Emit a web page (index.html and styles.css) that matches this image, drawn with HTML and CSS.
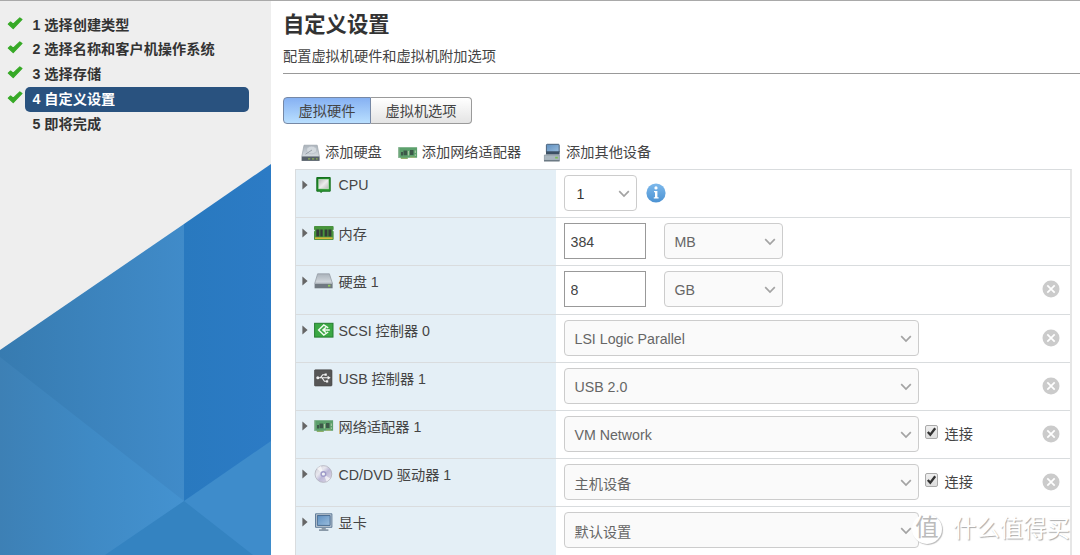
FILE: index.html
```html
<!DOCTYPE html>
<html lang="zh-CN">
<head>
    <meta charset="UTF-8">
    <meta name="viewport" content="width=device-width, initial-scale=1.0">
    <title>自定义设置</title>
    <link rel="stylesheet" href="styles.css">
</head>
<body>

    <!-- icons -->
    <svg class="defs" width="0" height="0">
        <defs>
            <linearGradient id="gGreen" x1="0" y1="0" x2="1" y2="1"><stop offset="0" stop-color="#127a1c"/><stop offset="1" stop-color="#39a53c"/></linearGradient>
            <linearGradient id="gGrey" x1="0" y1="0" x2="1" y2="1"><stop offset="0" stop-color="#b3b3b3"/><stop offset=".5" stop-color="#ececec"/><stop offset="1" stop-color="#b9b9b9"/></linearGradient>
            <linearGradient id="gDisk" x1="0" y1="0" x2="0" y2="1"><stop offset="0" stop-color="#aab2ba"/><stop offset="1" stop-color="#d6dce1"/></linearGradient>
            <linearGradient id="gBlue" x1="0" y1="0" x2="0" y2="1"><stop offset="0" stop-color="#7db9ec"/><stop offset="1" stop-color="#4c92d2"/></linearGradient>
            <linearGradient id="gScreen" x1="0" y1="0" x2="1" y2="1"><stop offset="0" stop-color="#5e8fc0"/><stop offset="1" stop-color="#9abddd"/></linearGradient>
            <linearGradient id="gCd" x1="0" y1="0" x2="1" y2="1"><stop offset="0" stop-color="#c9c9d2"/><stop offset=".35" stop-color="#e8e8ef"/><stop offset=".55" stop-color="#bdb9d8"/><stop offset="1" stop-color="#e4dfe8"/></linearGradient>
        </defs>
        <symbol id="check" viewBox="0 0 16 13"><path d="M1.3 7.1 3.6 5 6.2 7.2 12.8.9l2.2 1.5L6.2 11.5z" fill="#36a926" stroke="#36a926" stroke-width="1.2" stroke-linejoin="round"/></symbol>
        <symbol id="arrow" viewBox="0 0 6 10"><path d="M.4.6 5.6 5 .4 9.4z" fill="#666"/></symbol>
        <symbol id="chevron" viewBox="0 0 12 8"><path d="M1.2 1.2 6 6l4.8-4.8" fill="none" stroke="#a3a3a3" stroke-width="1.7"/></symbol>
        <symbol id="cpu" viewBox="0 0 20 18">
            <path d="M2.8 1.5h13.4v13.7H8.6l-1 1h-1l-1-1H2.8z" fill="url(#gGreen)" stroke="#167020"/>
            <rect x="4.8" y="3.4" width="9.6" height="9.4" fill="url(#gGrey)" stroke="#d3e8cf" stroke-width=".6"/>
        </symbol>
        <symbol id="memory" viewBox="0 0 20 18">
            <path d="M.5 2.5h18.6v3l-.8 1 .8 1v8H.5v-8l.8-1-.8-1z" fill="#47963b" stroke="#4a9140"/>
            <path d="M1 14.2h17.6" stroke="#d2b83c" stroke-width="1.8"/>
            <path d="M2.3 5.5h3v7h-3zM6.3 5.5h2.4v7H6.3zM10.6 5.5h2.8v7h-2.8zM14.4 5.5h3v7h-3z" fill="#343b38"/>
        </symbol>
        <symbol id="disk" viewBox="0 0 20 18">
            <path d="M3.6 1.8h11.8l3 9.4H.8z" fill="url(#gDisk)" stroke="#8f979f" stroke-width=".7"/>
            <path d="M.6 11.2h18v5.1H.6z" fill="#707981"/>
            <path d="M1 11.5h17.2" stroke="#abb3b9"/>
            <path d="M14 12.8h2.4v1.8H14z" fill="#94c95c"/>
        </symbol>
        <symbol id="drive" viewBox="0 0 20 18">
            <path d="M3 1.2h13.2l2.2 11.3H.8z" fill="url(#gDisk)" stroke="#9ba3ab" stroke-width=".7"/>
            <ellipse cx="10.6" cy="6" rx="5" ry="3.8" fill="#d3d9de" stroke="#b4bbc2" stroke-width=".6"/>
            <path d="m11 6-6.5 4.2" stroke="#89929a" stroke-width=".8"/>
            <path d="M.6 12.6h18v4.3H.6z" fill="#57616a"/>
            <path d="M7 14.8h2.2M11 14.8h2.2M15 14.8h1.6" stroke="#8faf53" stroke-width="1.2"/>
        </symbol>
        <symbol id="nic" viewBox="0 0 20 18">
            <path d="M.5 3.2h18.6v10.6H9.6v1.2H2.8v-1.2H.5z" fill="#5ca06c"/>
            <path d="M.8 3.2V14" stroke="#8bb594" stroke-width="1.2"/>
            <path d="M3 8h2v3.5H3zM5.5 6.5h3.7v4.8H5.5zM12 6h3.5v5H12z" fill="#3c5848"/>
            <path d="M10.4 7v4.5M17.3 6.5V9M17.3 10.3V12" stroke="#b4cbaa"/>
            <path d="M3 14.3h6.5M12 13.2h5" stroke="#a8b56c" stroke-width=".9"/>
        </symbol>
        <symbol id="scsi" viewBox="0 0 20 18">
            <rect x=".6" y="2.3" width="18.4" height="13.8" fill="#3ba844" stroke="#257d30"/>
            <path d="M14.2 6.8 9.8 4 4.6 9l5.2 5 4.4-3" fill="none" stroke="#f2faf0" stroke-width="1.4"/>
            <path d="M15.8 9H8.8m3.2-2.6L8.9 9l3.1 2.6" fill="none" stroke="#f2faf0" stroke-width="1.4"/>
        </symbol>
        <symbol id="usb" viewBox="0 0 20 18">
            <rect x=".4" y=".8" width="17.6" height="16.2" rx="1" fill="#565656" stroke="#444" stroke-width=".6"/>
            <path d="M3.5 8.8H14M6.3 8.8l2.4-3h2.6M8 8.8l2.4 3.5h2" fill="none" stroke="#f2f2f2" stroke-width="1.1"/>
            <circle cx="3.8" cy="8.8" r="1.5" fill="#f2f2f2"/>
            <path d="m13.6 6.8 3 2-3 2zM10.6 4.6h2.2v2.2h-2.2zM12 11.2h2.2v2.2H12z" fill="#f2f2f2"/>
        </symbol>
        <symbol id="cd" viewBox="0 0 20 18">
            <circle cx="9.4" cy="9" r="8.4" fill="url(#gCd)" stroke="#b2b2bc" stroke-width=".8"/>
            <path d="M9.4 9 3 3.8A8.2 8.2 0 0 1 7 1.1zM9.4 9l6.8 4.6a8.2 8.2 0 0 1-3.6 3z" fill="#fff" opacity=".65"/>
            <circle cx="9.4" cy="9" r="3" fill="#9f9bc9"/>
            <circle cx="9.4" cy="9" r="1.6" fill="#f1f3f6"/>
        </symbol>
        <symbol id="monitor" viewBox="0 0 20 20">
            <path d="M.6.9h18.2v15H.6z" fill="#c3ccd5" stroke="#54718f"/>
            <path d="M2.6 2.8h14.2v11H2.6z" fill="url(#gScreen)" stroke="#42668c"/>
            <path d="M7.4 16.4h4.6v2H7.4z" fill="#8b98a4"/>
            <path d="M4.5 19h10.4" stroke="#68798b" stroke-width="1.4"/>
        </symbol>
        <symbol id="device" viewBox="0 0 18 20">
            <path d="M4.2 1.3h11.2q.8 0 .8.8v7H3.4v-7q0-.8.8-.8z" fill="url(#gScreen)" stroke="#4b637c"/>
            <path d="M3 8.4h13.6v3.2H3z" fill="#3c5064"/>
            <path d="M1.4 12h15v5.4h-15z" fill="#a9b6bf" stroke="#8b979f" stroke-width=".8"/>
            <path d="M1 17.8h15.6" stroke="#66747f" stroke-width="1.4"/>
            <path d="M12.2 13.8h2.6v1.8h-2.6z" fill="#7cc053"/>
        </symbol>
        <symbol id="info" viewBox="0 0 20 20">
            <circle cx="10" cy="10" r="9.6" fill="url(#gBlue)"/>
            <path d="M8 8h3.4v6.2h1.2v1.4H7.8v-1.4H9V9.2H8z" fill="#fff"/>
            <circle cx="10" cy="4.9" r="1.6" fill="#fff"/>
        </symbol>
        <symbol id="remove" viewBox="0 0 18 18">
            <circle cx="9" cy="9" r="8.5" fill="#cbcbcb"/>
            <path d="m5.3 5.3 7.4 7.4m0-7.4-7.4 7.4" stroke="#fff" stroke-width="1.7"/>
        </symbol>
        <symbol id="tick" viewBox="0 0 11 12">
            <path d="m1.8 6 2.5 2.8L9.2 2.2" fill="none" stroke="#333" stroke-width="2.3"/>
        </symbol>
    </svg>

    <div class="wizard">
        <div class="sidebar">
            <svg class="sidebar-bg" viewBox="0 0 271 555">
                <defs>
                    <linearGradient id="f1"><stop offset="0" stop-color="#377bb0"/><stop offset="1" stop-color="#408bc9"/></linearGradient>
                    <linearGradient id="f2"><stop offset="0" stop-color="#3d80b5"/><stop offset=".5" stop-color="#3f8ac5"/><stop offset="1" stop-color="#4492d0"/></linearGradient>
                    <linearGradient id="f3"><stop offset="0" stop-color="#2979bf"/><stop offset="1" stop-color="#2c7bc5"/></linearGradient>
                </defs>
                <!-- each facet runs under the next one so no seam shows -->
                <path d="M0 350 184 224V555H0z" fill="url(#f1)"/>
                <path d="M184 224 271 164V555H184z" fill="url(#f3)"/>
                <path d="M0 357 184 501V555H0z" fill="url(#f2)"/>
                <path d="M184 501 271 441V555H184z" fill="#3e8ccb"/>
                <path d="M184 501 253 555H105z" fill="#3483c1"/>
            </svg>
            <ul class="steps">
                <li><svg class="check"><use href="#check"/></svg><span>1 选择创建类型</span></li>
                <li><svg class="check"><use href="#check"/></svg><span>2 选择名称和客户机操作系统</span></li>
                <li><svg class="check"><use href="#check"/></svg><span>3 选择存储</span></li>
                <li class="active"><svg class="check"><use href="#check"/></svg><span>4 自定义设置</span></li>
                <li><i class="check"></i><span>5 即将完成</span></li>
            </ul>
        </div>

        <div class="content">
            <h1>自定义设置</h1>
            <p class="subtitle">配置虚拟机硬件和虚拟机附加选项</p>

            <div class="tabs">
                <button class="tab selected">虚拟硬件</button>
                <button class="tab">虚拟机选项</button>
            </div>

            <div class="toolbar">
                <span class="tool"><svg class="icon"><use href="#drive"/></svg>添加硬盘</span>
                <span class="tool"><svg class="icon"><use href="#nic"/></svg>添加网络适配器</span>
                <span class="tool other"><svg class="icon"><use href="#device"/></svg>添加其他设备</span>
            </div>

            <div class="hardware">
                <div class="row">
                    <div class="label"><svg class="arrow"><use href="#arrow"/></svg><svg class="icon"><use href="#cpu"/></svg>CPU</div>
                    <div class="value">
                        <div class="select tiny">1<svg class="chevron"><use href="#chevron"/></svg></div>
                        <svg class="info"><use href="#info"/></svg>
                    </div>
                </div>
                <div class="row">
                    <div class="label"><svg class="arrow"><use href="#arrow"/></svg><svg class="icon"><use href="#memory"/></svg>内存</div>
                    <div class="value">
                        <input class="number" type="text" value="384">
                        <div class="select unit">MB<svg class="chevron"><use href="#chevron"/></svg></div>
                    </div>
                </div>
                <div class="row">
                    <div class="label"><svg class="arrow"><use href="#arrow"/></svg><svg class="icon"><use href="#disk"/></svg>硬盘 1</div>
                    <div class="value">
                        <input class="number" type="text" value="8">
                        <div class="select unit">GB<svg class="chevron"><use href="#chevron"/></svg></div>
                        <svg class="remove"><use href="#remove"/></svg>
                    </div>
                </div>
                <div class="row">
                    <div class="label"><svg class="arrow"><use href="#arrow"/></svg><svg class="icon"><use href="#scsi"/></svg>SCSI 控制器 0</div>
                    <div class="value">
                        <div class="select">LSI Logic Parallel<svg class="chevron"><use href="#chevron"/></svg></div>
                        <svg class="remove"><use href="#remove"/></svg>
                    </div>
                </div>
                <div class="row">
                    <div class="label"><i class="arrow"></i><svg class="icon"><use href="#usb"/></svg>USB 控制器 1</div>
                    <div class="value">
                        <div class="select">USB 2.0<svg class="chevron"><use href="#chevron"/></svg></div>
                        <svg class="remove"><use href="#remove"/></svg>
                    </div>
                </div>
                <div class="row">
                    <div class="label"><svg class="arrow"><use href="#arrow"/></svg><svg class="icon"><use href="#nic"/></svg>网络适配器 1</div>
                    <div class="value">
                        <div class="select">VM Network<svg class="chevron"><use href="#chevron"/></svg></div>
                        <div class="connect"><svg class="checkbox"><use href="#tick"/></svg>连接</div>
                        <svg class="remove"><use href="#remove"/></svg>
                    </div>
                </div>
                <div class="row">
                    <div class="label"><svg class="arrow"><use href="#arrow"/></svg><svg class="icon"><use href="#cd"/></svg>CD/DVD 驱动器 1</div>
                    <div class="value">
                        <div class="select">主机设备<svg class="chevron"><use href="#chevron"/></svg></div>
                        <div class="connect"><svg class="checkbox"><use href="#tick"/></svg>连接</div>
                        <svg class="remove"><use href="#remove"/></svg>
                    </div>
                </div>
                <div class="row">
                    <div class="label"><svg class="arrow"><use href="#arrow"/></svg><svg class="icon"><use href="#monitor"/></svg>显卡</div>
                    <div class="value">
                        <div class="select">默认设置<svg class="chevron"><use href="#chevron"/></svg></div>
                    </div>
                </div>
            </div>
        </div>
    </div>

    <div class="watermark"><span class="badge">值</span><span>什么值得买</span></div>

</body>
</html>
```
FILE: styles.css
```css
* {
    box-sizing: border-box;
}
body {
    margin: 0;
    height: 555px;
    overflow: hidden;
    background: #fff;
    color: #444;
    font-family: "Liberation Sans", "Noto Sans CJK SC", sans-serif;
    font-size: 14.2px;
}
svg {
    display: block;
    flex: none;
}
.defs {
    position: absolute;
}
.wizard {
    display: flex;
    height: 555px;
    border-top: 1px solid #a9a9a9;
}

/* left panel */
.sidebar {
    position: relative;
    width: 271px;
    flex: none;
    background: #eee;
}
.sidebar-bg {
    position: absolute;
    top: -1px;
    left: 0;
    width: 271px;
    height: 555px;
}
.steps {
    position: relative;
    list-style: none;
    margin: 0;
    padding: 11.5px 22px 0 7px;
    font-weight: bold;
    color: #333;
}
.steps li {
    display: flex;
    height: 24.9px;
}
.steps span {
    flex: 1;
    height: 25px;
    line-height: 25px;
    padding-left: 7.5px;
    border-radius: 5px;
}
.check {
    width: 16px;
    height: 13px;
    margin: 4px 2px 0 0;
}
.active span {
    background: #29527f;
    color: #fff;
}

/* main area */
.content {
    flex: 1;
    padding-left: 12px;
}
h1 {
    margin: 0;
    padding-top: 9px;
    height: 40px;
    font-size: 21.3px;
    line-height: 31px;
    color: #333;
}
.subtitle {
    margin: 0;
    height: 33px;
    line-height: 30px;
    border-bottom: 1px solid #999;
}
.tabs {
    display: flex;
    margin-top: 23px;
}
.tab {
    height: 27px;
    width: 101px;
    padding: 0 0 2px;
    font: inherit;
    color: #444;
    border: 1px solid #9a9a9a;
    border-left: none;
    border-radius: 0 4px 4px 0;
    background: linear-gradient(#fff, #e4e4e4);
}
.tab.selected {
    width: 88px;
    border: 1px solid #7688a5;
    border-radius: 4px 0 0 4px;
    background: linear-gradient(#86b1f2, #b9dfff);
}
.toolbar {
    display: flex;
    height: 45px;
    padding: 12px 0 0 18px;
    gap: 16px;
    line-height: 33px;
}
.tool {
    display: flex;
    align-items: center;
    height: 33px;
}
.icon {
    width: 20px;
    height: 18px;
    margin-right: 4px;
}
.tool.other {
    margin-left: 5px;
}
.other .icon {
    height: 20px;
}

/* hardware table */
.hardware {
    width: 777px;
    margin-left: 12px;
    border: 1px solid #d9dcde;
    border-right: 2px solid #e6e6e6;
}
.row {
    display: flex;
    height: 48.2px;
    border-bottom: 1px solid #d9dcde;
}
.label {
    display: flex;
    align-items: center;
    width: 260px;
    height: 47.2px;
    padding: 0 0 17px 6px;
    background: #e4eff6;
}
.label .icon {
    margin-right: 4.5px;
}
.arrow {
    width: 6px;
    height: 10px;
    margin-right: 6px;
}
.value {
    display: flex;
    flex: 1;
    align-items: center;
    padding: 0 10px 1px 7.5px;
}
.select {
    display: flex;
    align-items: center;
    justify-content: space-between;
    width: 355px;
    height: 36px;
    padding: 2px 6px 0 10px;
    border: 1px solid #ccc;
    border-radius: 4px;
    background: #fafafa;
    color: #666;
}
.select.tiny {
    width: 73px;
    padding-left: 12px;
    background: #fff;
    color: #333;
}
.select.unit {
    width: 119px;
    margin-left: 18px;
}
.chevron {
    width: 12px;
    height: 8px;
}
.number {
    width: 82px;
    height: 36px;
    padding: 2px 6px 0;
    border: 1px solid #999;
    font: inherit;
    color: #444;
}
.info {
    width: 20px;
    height: 20px;
    margin-left: 9px;
}
.remove {
    width: 18px;
    height: 18px;
    margin-left: auto;
}
.connect {
    display: flex;
    align-items: center;
    margin-left: 6px;
    padding-bottom: 2px;
}
.checkbox {
    width: 13px;
    height: 14px;
    margin: 0 7px 2px 0;
    border: 1px solid #aaa;
    border-radius: 2px;
    background: linear-gradient(#eee, #ddd);
}

/* watermark over the lower right corner */
.watermark {
    position: absolute;
    left: 912px;
    top: 514px;
    display: flex;
    align-items: center;
    gap: 11px;
    font-size: 23.4px;
    line-height: 30px;
    white-space: nowrap;
    color: #fff;
    text-shadow: 1px 1px 1px #aaa;
}
.badge {
    width: 30px;
    height: 30px;
    border-radius: 50%;
    text-align: center;
    line-height: 28px;
    background: #fff;
    color: #bbb;
    text-shadow: none;
    box-shadow: 1px 1px 1px #bbb;
}
```
